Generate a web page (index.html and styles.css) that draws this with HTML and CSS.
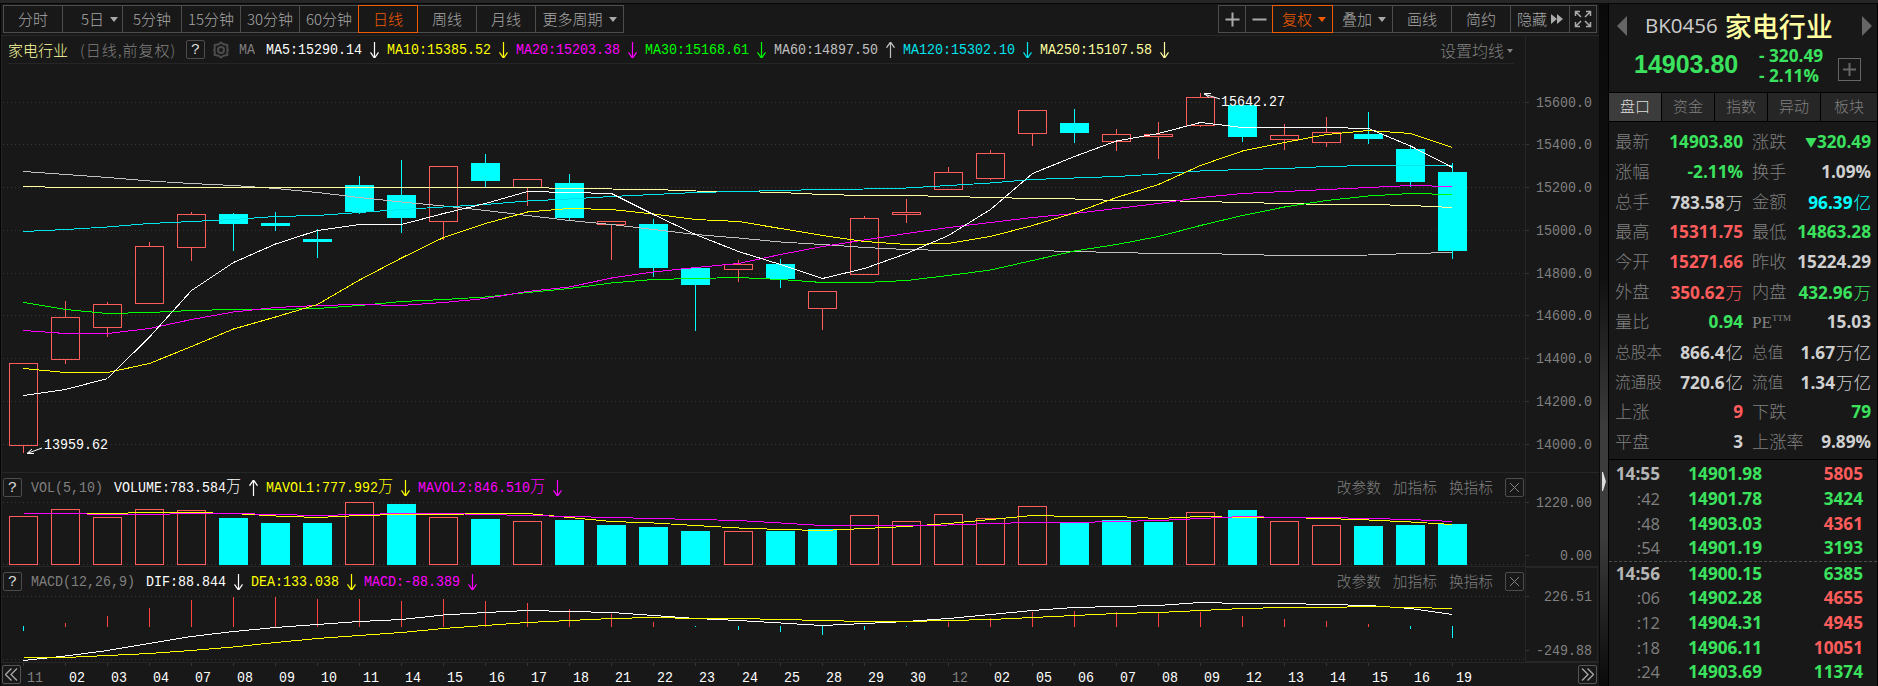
FILE: index.html
```html
<!DOCTYPE html>
<html lang="zh-CN">
<head>
  <meta charset="UTF-8" />
  <title>家电行业 BK0456</title>
  <link rel="stylesheet" href="styles.css">
</head>
<body>
  <div class="app">
    <main class="chart">
      <nav class="toolbar">
        <div class="btns">
          <button>分时</button>
          <button class="pad-left">5日<i class="caret"></i></button>
          <button>5分钟</button>
          <button>15分钟</button>
          <button>30分钟</button>
          <button>60分钟</button>
          <button class="active">日线</button>
          <button>周线</button>
          <button>月线</button>
          <button class="more">更多周期<i class="caret"></i></button>
        </div>
        <div class="btns right">
          <button class="sm"><svg width="15" height="15"><path d="M7.5 0.5v14M0.5 7.5h14" stroke="#aaa" stroke-width="2"/></svg></button>
          <button class="sm"><svg width="15" height="15"><path d="M0.5 7.5h14" stroke="#aaa" stroke-width="2"/></svg></button>
          <button class="active wide">复权<i class="caret"></i></button>
          <button class="wide">叠加<i class="caret"></i></button>
          <button>画线</button>
          <button>简约</button>
          <button>隐藏<svg class="ff" width="12" height="10"><path d="M0 0l6 5-6 5zM6 0l6 5-6 5z" fill="#aaa"/></svg></button>
          <button class="sm"><svg width="18" height="18" fill="none" stroke="#aaa" stroke-width="1.5"><path d="M1.5 6V1.5H6M2 2l5 5M12 1.5h4.5V6M16 2l-5 5M1.5 12v4.500H6M2 16l5-5M12 16.500h4.500V12M16 16l-5-5"/></svg></button>
        </div>
      </nav>

      <section class="panel price">
        <div class="plot">
          <header class="info">
            <span class="name">家电行业</span>
            <span class="period">(日线,前复权)</span>
            <span class="help">?</span>
            <svg class="gear" width="18" height="18" fill="none" stroke="#4c4c4c" stroke-width="2"><path d="M9 1.500l2.500 1.800 3.800 .700v4l.700 1-.700 1v4l-3.800 .700L9 16.500l-2.500-1.800-3.800-.700v-4L2 9l.700-1V4l3.800-.700z"/><circle cx="9" cy="9" r="3"/></svg>
            <span class="mono dim ma">MA</span>
            <span class="legend" id="maLegend"></span>
            <span class="setting">设置均线<i class="caret small"></i></span>
          </header>
          <svg id="priceSvg" width="1525" height="408" viewBox="0 64 1525 408"></svg>
        </div>
        <svg class="axis" id="priceAxis" width="72" height="436" viewBox="1526 36 72 436"></svg>
      </section>

      <section class="panel vol">
        <div class="plot">
          <header class="info sub">
            <span class="help">?</span>
            <span class="mono dim">VOL(5,10)</span>
            <span class="legend" id="volLegend"></span>
            <span class="links"><a>改参数</a><a>加指标</a><a>换指标</a></span>
            <span class="close"><svg width="11" height="11"><path d="M1 1l9 9M10 1l-9 9" stroke="#808080"/></svg></span>
          </header>
          <svg id="volSvg" width="1525" height="65" viewBox="0 501 1525 65"></svg>
        </div>
        <svg class="axis" id="volAxis" width="72" height="93" viewBox="1526 473 72 93"></svg>
      </section>

      <section class="panel macd">
        <div class="plot">
          <header class="info sub">
            <span class="help">?</span>
            <span class="mono dim">MACD(12,26,9)</span>
            <span class="legend" id="macdLegend"></span>
            <span class="links"><a>改参数</a><a>加指标</a><a>换指标</a></span>
            <span class="close"><svg width="11" height="11"><path d="M1 1l9 9M10 1l-9 9" stroke="#808080"/></svg></span>
          </header>
          <svg id="macdSvg" width="1525" height="67" viewBox="0 595 1525 67"></svg>
        </div>
        <svg class="axis boxed" id="macdAxis" width="71" height="93" viewBox="1526 568 71 93"></svg>
      </section>

      <footer class="dates">
        <span class="page"><svg width="13" height="13" fill="none" stroke="#aaa" stroke-width="1.300"><path d="M6.500 0.500l-6 6 6 6M12 0.500l-6 6 6 6"/></svg></span>
        <svg id="dateSvg" width="1500" height="23" viewBox="21 663 1500 23"></svg>
        <span class="page"><svg width="13" height="13" fill="none" stroke="#aaa" stroke-width="1.300"><path d="M1 0.500l6 6-6 6M6.500 0.500l6 6-6 6"/></svg></span>
      </footer>
    </main>

    <div class="splitter"><svg width="4" height="19"><path d="M0 0l1 0 3 9.500-3 9.500-1 0z" fill="#ddd"/></svg></div>

    <aside class="quote">
      <div class="title">
        <i class="tri left"></i>
        <span class="code">BK0456</span>
        <span class="stock">家电行业</span>
        <i class="tri right"></i>
      </div>
      <div class="summary">
        <span class="last">14903.80</span>
        <span class="diff"><b>- 320.49</b><b>- 2.11%</b></span>
        <span class="add"><svg width="13" height="13"><path d="M6.500 0v13M0 6.500h13" stroke="#666" stroke-width="2"/></svg></span>
      </div>
      <div class="tabs">
        <span class="on">盘口</span><span>资金</span><span>指数</span><span>异动</span><span>板块</span>
      </div>
      <div class="fields" id="fields"></div>
      <div class="ticks" id="ticks"></div>
    </aside>
  </div>
  <script src="chart.js"></script>
</body>
</html>
```
FILE: styles.css
```css
* {
  box-sizing: border-box;
}
body {
  margin: 0;
  background: #181818;
  color: #a8a8a8;
  font-family: "Noto Sans CJK SC", sans-serif;
  font-weight: 300;
  font-size: 15px;
  overflow: hidden;
}
.app {
  display: flex;
  width: 1878px;
  height: 686px;
  border-top: 3px solid #262626;
}
.chart {
  width: 1600px;
  border-left: 1px solid #050505;
  border-top: 1px solid #050505;
  border-right: 1px solid #0a0a0a;
  display: flex;
  flex-direction: column;
}
.toolbar {
  height: 32px;
  flex: none;
  padding: 1px 2px 0 2px;
  display: flex;
  justify-content: space-between;
  align-items: flex-start;
  border-bottom: 1px solid #262626;
}
.btns {
  display: flex;
}
button {
  width: 60px;
  height: 28px;
  margin-right: -1px;
  padding: 0;
  display: flex;
  align-items: center;
  justify-content: center;
  white-space: nowrap;
  background: none;
  border: 1px solid #4c4c4c;
  color: #a8a8a8;
  font: inherit;
  line-height: 26px;
}
button:last-child {
  margin-right: 0;
}
button.pad-left {
  width: 61px;
  padding-left: 14px;
}
button.more {
  width: 89px;
}
button.sm {
  width: 28px;
}
button.wide {
  width: 61px;
  padding-left: 3px;
}
button.active {
  position: relative;
  border-color: #f25a00;
  color: #f25a00;
}
.caret {
  border: 4px solid transparent;
  border-top: 5px solid #a8a8a8;
  border-bottom: 0;
  margin-left: 6px;
}
.active .caret {
  border-top-color: #f25a00;
}
.caret.small {
  display: inline-block;
  border-width: 4px 3px 0;
  border-top-color: #808080;
  margin-left: 3px;
  vertical-align: 4px;
}
.ff {
  margin-left: 4px;
}
.panel {
  display: flex;
  flex: none;
  border-bottom: 1px solid #262626;
}
.price {
  height: 437px;
}
.vol {
  height: 94px;
}
.macd {
  height: 96px;
}
.plot {
  width: 1524px;
  border-left: 1px solid #222;
}
.panel svg {
  display: block;
}
.plot > svg {
  margin-left: -2px;
}
.panel .axis {
  box-sizing: content-box;
  border-left: 1px solid #262626;
  flex: none;
}
.panel .axis.boxed {
  border: 1px solid #262626;
}
.info {
  height: 28px;
  margin: 0 11px 0 6px;
  border-bottom: 1px solid #262626;
  display: flex;
  align-items: center;
  white-space: nowrap;
  line-height: 26px;
}
.info.sub {
  border: 0;
  margin: 0 0 0 1px;
}
.name {
  color: #ffffa0;
  width: 72px;
  font-size: 15px;
}
.period {
  color: #808080;
  width: 106px;
  font-size: 15px;
  letter-spacing: 1px;
}
.help, .close {
  width: 19px;
  height: 19px;
  border: 1px solid #4c4c4c;
  border-radius: 2px;
  flex: none;
}
.help {
  color: #ddd;
  font: 15px/19px "Liberation Mono", monospace;
  text-align: center;
}
.sub .help {
  margin-right: 9px;
}
.close {
  display: flex;
  align-items: center;
  justify-content: center;
  margin-right: 1px;
}
.gear {
  margin: 0 9px 0 7px;
}
.mono, .legend {
  font-family: "Liberation Mono", "Noto Sans CJK SC", monospace;
  font-weight: 400;
  font-size: 13.330px;
  line-height: 20px;
  padding-top: 1px;
  transform: scaleY(1.150);
}
.dim {
  color: #808080;
}
.ma {
  width: 27px;
}
.sub .dim {
  margin-right: 11px;
}
.legend {
  display: flex;
}
.legend span {
  display: flex;
  align-items: center;
}
.legend i {
  font-style: normal;
  font-weight: 300;
  font-size: 15px;
}
.legend svg {
  width: 25px;
  height: 14px;
}
.setting {
  margin-left: auto;
  color: #808080;
  font-size: 16px;
}
.price .setting {
  margin-right: 1px;
}
.links {
  margin-left: auto;
  color: #808080;
  font-size: 14.700px;
}
.links a {
  margin-right: 12px;
}
.dates {
  height: 23px;
  display: flex;
  padding: 0 1px;
}
.dates > svg {
  margin-right: 57px;
  flex: none;
}
.page {
  width: 19px;
  height: 19px;
  margin-top: 2px;
  border: 1px solid #555;
  border-radius: 2px;
  display: flex;
  align-items: center;
  justify-content: center;
  flex: none;
}
svg text {
  font-family: "Liberation Mono", monospace;
  font-size: 13.330px;
  font-weight: 400;
}
.splitter {
  width: 9px;
  flex: none;
  border-right: 1px solid #000;
  background: linear-gradient(#0a0a0a, #101010 40%, #3c3c3c 62%, #3c3c3c 78%, #0a0a0a);
  padding: 469px 0 0 2px;
}
.quote {
  width: 269px;
  border-right: 1px solid #000;
  border-top: 1px solid #050505;
  font-family: "Open Sans", "Noto Sans CJK SC", sans-serif;
}
.title {
  height: 44px;
  padding: 0 5px 0 8px;
  display: flex;
  align-items: center;
  white-space: nowrap;
}
.tri {
  border: 10px solid transparent;
}
.tri.left {
  border-left: 0;
  border-right-color: #666;
}
.tri.right {
  border-right: 0;
  border-left-color: #666;
  margin-left: auto;
}
.code {
  font-size: 20.500px;
  font-weight: 400;
  color: #ccc;
  margin: -2px 7px 0 18px;
}
.stock {
  font-size: 27px;
  font-weight: 500;
  color: #ffffa0;
  margin-top: -2px;
}
.summary {
  height: 44px;
  padding-left: 25px;
  display: flex;
  color: #3be25e;
}
.last {
  width: 125px;
  font: bold 25px/33px "Liberation Sans", sans-serif;
}
.diff {
  width: 79px;
  font-size: 17.200px;
  line-height: 20px;
  margin-top: -2px;
}
.diff b {
  display: block;
  font-weight: 700;
}
.add {
  width: 23px;
  height: 23px;
  margin-top: 10px;
  border: 1px solid #666;
  display: flex;
  align-items: center;
  justify-content: center;
}
.tabs {
  height: 30px;
  display: flex;
  gap: 1px;
  background: #000;
  padding: 1px 0;
}
.tabs span {
  width: 52px;
  background: #262626;
  color: #808080;
  text-align: center;
  line-height: 27px;
}
.tabs .on {
  background: #3c3c3c;
  color: #ddd;
}
.tabs span:last-child {
  flex: 1;
}
.fields {
  height: 338px;
  padding: 5px 6px 0 6px;
  border-bottom: 1px solid #000;
  display: grid;
  grid-template-columns: 128px 1fr;
  grid-auto-rows: 30px;
  column-gap: 9px;
}
.field {
  display: flex;
  justify-content: space-between;
  white-space: nowrap;
  line-height: 30px;
  font-size: 17.200px;
  color: #808080;
}
.field.tight label {
  font-size: 15.700px;
}
.field b {
  color: #d0d0d0;
  font-weight: 700;
}
.field i {
  font-style: normal;
  font-weight: 300;
  font-size: 17.500px;
  margin-left: 1px;
}
.field small {
  font-size: 12px;
  vertical-align: 1px;
}
.field sup {
  font-size: 9px;
  line-height: 0;
}
.pe {
  font-family: "Liberation Serif", serif;
}
.tick {
  height: 24.800px;
  display: grid;
  grid-template-columns: 51px 102px 101px;
  text-align: right;
  font-size: 17.200px;
  font-weight: 700;
  line-height: 24.800px;
}
.ticks {
  padding-top: 2px;
}
.tick span {
  color: #808080;
  font-weight: 400;
  font-size: 16.500px;
}
.tick .minute {
  color: #b4b4b4;
  font-weight: 700;
  font-size: 17.200px;
}
.tick b {
  font-weight: 700;
}
.tick.dash {
  border-top: 1px dashed #4c4c4c;
}
.up, .field .up {
  color: #ff5c5c;
}
.down, .field .down {
  color: #3be25e;
}
.field .cyan {
  color: #00ffff;
}
```
FILE: chart.js
```js
const RED = "#ff5c5c";
const CYAN = "#00ffff";
const X0 = 23;
const STEP = 42.03;
const x = i => Math.round(X0 + STEP * i);

// [high, top, bottom, low, up]
const candles = [
  [363,363,445,453,1],[301,317,359,364,1],[302,304,327,337,1],[242,246,303,303,1],[212,214,247,261,1],
  [213,214,224,251,0],[212,223,226,231,0],[229,239,242,258,0],[176,185,212,214,0],[160,195,218,233,0],
  [166,166,221,240,1],[154,163,181,187,0],[179,179,187,206,1],[174,183,218,220,0],[221,221,224,260,1],
  [219,224,268,277,0],[268,268,285,331,0],[260,264,269,282,1],[259,264,279,288,0],[291,291,308,330,1],
  [216,218,274,274,1],[199,212,214,223,1],[167,172,189,189,1],[150,153,178,180,1],[110,110,133,146,1],
  [109,123,133,143,0],[129,134,141,151,1],[122,134,136,159,1],[93,97,125,127,1],[105,105,137,142,0],
  [124,135,139,150,1],[117,132,142,147,1],[112,134,139,144,0],[146,149,182,187,0],[163,172,251,259,0]
];
const volumes = [516,509,517,509,510,518,523,523,502,504,517,519,521,520,525,527,531,531,531,529,515,521,514,518,506,522,520,522,512,510,521,525,526,525,524];
const volUp = "11111000101010000100111110001011000";
const macd = [631,623,616,608,600,597,597,599,599,601,599,601,603,609,614,622,627,630,632,635,630,627,622,618,612,611,612,613,612,616,619,621,624,629,638];
const macdUp = i => i > 0 && (i < 16 || (i > 21 && i < 33));

const maLines = {
  "#c0c0c0": [171,174,177,180.5,183,185,188,192,197,201.5,205.5,210,215,220,224,229,234,237.5,241.5,244,247,249,250,250,250,251,252,253,253,254,255,255,254.5,253,252],
  "#ffffa0": [186,187,187,187,187,187,187,187,187,187,187,187,187,188,188.5,189,190.5,191,192,194,195,195,196,197,198,198.5,200,200,201,202,203,204,204,205,207],
  "#00e5ee": [231,229,226.5,223,221,219,216,215,212,209,206.5,204,200.5,198.5,196,194,192,191,190,189,188.5,187.5,185,182.5,179,177.5,176,173.5,170.5,169,168,166,165,165,165],
  "#00ff00": [302,309,313,312,310,309,309,308,305,301,299,296.5,292,288,282.5,279,278,277,279,282,282,280,275,269.5,260,250.5,244,236,225,215,206.5,200,195.5,193,194],
  "#ff00ff": [330,333,333,328,319,311.5,307,305,304,305,302,298,291,286.5,277.5,271.5,267,263,254,246,239.5,233,227,222,217,213,208,203,197,193,191,189,187,185,186],
  "#ffff00": [368,372,372,363,346,328.5,316.5,304,279.5,257.5,237,223,211.5,208,209,213.5,219,221,228,235,241,244,243,236,225,212.5,197,184,165,150.5,142,134,130,133,147],
  "#ffffff": [395,389,378,336.5,290,262,243.5,230,224,224,213,203,191,192,193,214,234,251,264,278,268,253,235,209,173,156,140.5,133,122,127,127,127,128,145.5,167]
};
const volLines = {
  "#ffff00": [513,513,513,512,512,513,515.5,517,515,514,514,513,513,517,521,522.5,525,527.5,529,530,528,526,523,519,515,516,516,518,516,517,517,518,519.5,521.5,524],
  "#ff00ff": [513,513,514,514,513,513,514,515,514,513,513,514,515,516,517,518,519,520,522.5,525,525,525,524.5,523,522,522,521,520,518,516,517,517,518,519,521]
};
const macdLines = {
  "#ffffff": [660,655.5,650,643,636,631,627,624,621,619,614.5,612,610,611,612,615,618,620,622.5,625,623,621,618,614,610,607,606,605,602,603,603,604,605,608,614],
  "#ffff00": [657,657,655,653,650,646.5,642,638,635,632,628,625,622,620,618,617,618,618,619,620,621,621,620,619,617,615,613,612,610,608,607,607,606,607,608]
};

function line(x1, y1, x2, y2, color, extra = "") {
  return `<path d="M${x1} ${y1}L${x2} ${y2}" stroke="${color}" ${extra}/>`;
}
function grid(ys) {
  return ys.map(y => line(3, y + 0.5, 1525, y + 0.5, "#363636", 'stroke-dasharray="1 3"')).join("");
}
function box(i, top, bottom, up) {
  const left = x(i) - 14;
  return up
    ? `<rect x="${left + 0.5}" y="${top + 0.5}" width="28" height="${bottom - top}" fill="none" stroke="${RED}"/>`
    : `<rect x="${left}" y="${top}" width="29" height="${bottom - top}" fill="${CYAN}"/>`;
}
function curves(set) {
  return Object.entries(set).map(([color, ys]) =>
    `<polyline fill="none" stroke="${color}" points="${ys.map((y, i) => `${x(i) + 0.5},${y + 0.5}`).join(" ")}"/>`
  ).join("");
}
// labels are stretched to the tall, narrow digit shape
function label(tx, cy, text, color, anchor = "start") {
  return `<text transform="translate(${tx} ${cy + 5.2}) scale(1 1.15)" fill="${color}" text-anchor="${anchor}">${text}</text>`;
}
function crisp(inner) {
  return `<g shape-rendering="crispEdges">${inner}</g>`;
}
function fill(id, html) {
  document.getElementById(id).innerHTML = html;
}

fill("priceSvg",
  crisp(
    grid([102, 144, 187, 230, 273, 315, 358, 401, 444]) +
    candles.map(([h, t, b, l, up], i) => {
      const c = up ? RED : CYAN;
      const cx = x(i) + 0.5;
      return (h < t ? line(cx, h, cx, t, c) : "") + (l > b ? line(cx, b, cx, l, c) : "") + box(i, t, b, up);
    }).join("") +
    curves(maLines)
  ) +
  `<path d="M42 448L27 453.500M32 449l-5 4.500h7" fill="none" stroke="#fff"/>` + label(44, 443.5, "13959.62", "#fff") +
  `<path d="M1220 99l-16-5M1211 93.500h-7l5 4" fill="none" stroke="#fff"/>` + label(1221, 101, "15642.27", "#fff")
);
fill("volSvg", crisp(
  grid([502, 564]) + volumes.map((v, i) => {
    const up = volUp[i] === "1";
    return box(i, v, up ? 564 : 565, up);
  }).join("") + curves(volLines)
));
fill("macdSvg", crisp(
  grid([596, 659]) +
  macd.map((v, i) => macdUp(i) ? line(x(i) + 0.5, v, x(i) + 0.5, 627, "#ff4040") : line(x(i) + 0.5, 626, x(i) + 0.5, v, CYAN)).join("") +
  curves(macdLines)
));

function axis(id, items) {
  fill(id, items.map(([y, t]) => line(1525, y + 0.5, 1529, y + 0.5, "#363636") + label(1592, y, t, "#808080", "end")).join(""));
}
axis("priceAxis", [102, 144, 187, 230, 273, 315, 358, 401, 444].map((y, i) => [y, (15600 - i * 200) + ".0"]));
axis("volAxis", [[502, "1220.00"], [555, "0.00"]]);
axis("macdAxis", [[596, "226.51"], [650, "-249.88"]]);

const days = "11 02 03 04 07 08 09 10 11 14 15 16 17 18 21 22 23 24 25 28 29 30 12 02 05 06 07 08 09 12 13 14 15 16 19".split(" ");
fill("dateSvg", days.map((d, i) =>
  line(x(i) + 0.5, 663, x(i) + 0.5, 666, "#363636") + label(x(i) + 4, 676.5, d, i === 0 || i === 22 ? "#808080" : "#fff")
).join(""));

function legend(id, items) {
  fill(id, items.map(([text, color, up]) => `<span style="color:${color}">${text.replace("万", "<i>万</i>")}<svg viewBox="0 0 25 14" fill="none" stroke="currentColor" stroke-width="1.2">${
    up ? '<path d="M12.5 14V0M8.500 5l4-5 4 5"/>' : '<path d="M12.5 0v14M8.500 9l4 5 4-5"/>'
  }</svg></span>`).join(""));
}
legend("maLegend", [
  ["MA5:15290.14", "#ffffff"], ["MA10:15385.52", "#ffff00"], ["MA20:15203.38", "#ff00ff"], ["MA30:15168.61", "#00ff00"],
  ["MA60:14897.50", "#c0c0c0", true], ["MA120:15302.10", "#00e5ee"], ["MA250:15107.58", "#ffffa0"]
]);
legend("volLegend", [["VOLUME:783.584万", "#ffffff", true], ["MAVOL1:777.992万", "#ffff00"], ["MAVOL2:846.510万", "#ff00ff"]]);
legend("macdLegend", [["DIF:88.844", "#ffffff"], ["DEA:133.038", "#ffff00"], ["MACD:-88.389", "#ff00ff"]]);

const fields = [
  ["最新", "14903.80", "down"], ["涨跌", "<small>▼</small>320.49", "down"],
  ["涨幅", "-2.11%", "down"], ["换手", "1.09%"],
  ["总手", "783.58<i>万</i>"], ["金额", "96.39<i>亿</i>", "cyan"],
  ["最高", "15311.75", "up"], ["最低", "14863.28", "down"],
  ["今开", "15271.66", "up"], ["昨收", "15224.29"],
  ["外盘", "350.62<i>万</i>", "up"], ["内盘", "432.96<i>万</i>", "down"],
  ["量比", "0.94", "down"], ['<span class="pe">PE<sup>TTM</sup></span>', "15.03"],
  ["总股本", "866.4<i>亿</i>", "", "tight"], ["总值", "1.67<i>万亿</i>", "", "tight"],
  ["流通股", "720.6<i>亿</i>", "", "tight"], ["流值", "1.34<i>万亿</i>", "", "tight"],
  ["上涨", "9", "up"], ["下跌", "79", "down"],
  ["平盘", "3"], ["上涨率", "9.89%"]
];
fill("fields", fields.map(([k, v, c = "", t = ""]) =>
  `<div class="field ${t}"><label>${k}</label><b class="${c}">${v}</b></div>`).join(""));

const ticks = [
  ["14:55", "14901.98", "5805", "up"], [":42", "14901.78", "3424", "down"], [":48", "14903.03", "4361", "up"],
  [":54", "14901.19", "3193", "down"], ["14:56", "14900.15", "6385", "down"], [":06", "14902.28", "4655", "up"],
  [":12", "14904.31", "4945", "up"], [":18", "14906.11", "10051", "up"], [":24", "14903.69", "11374", "down"]
];
fill("ticks", ticks.map(([t, p, n, c], i) =>
  `<div class="tick${i === 4 ? " dash" : ""}"><span class="${t.length > 3 ? "minute" : ""}">${t}</span><b class="down">${p}</b><b class="${c}">${n}</b></div>`).join(""));
```
